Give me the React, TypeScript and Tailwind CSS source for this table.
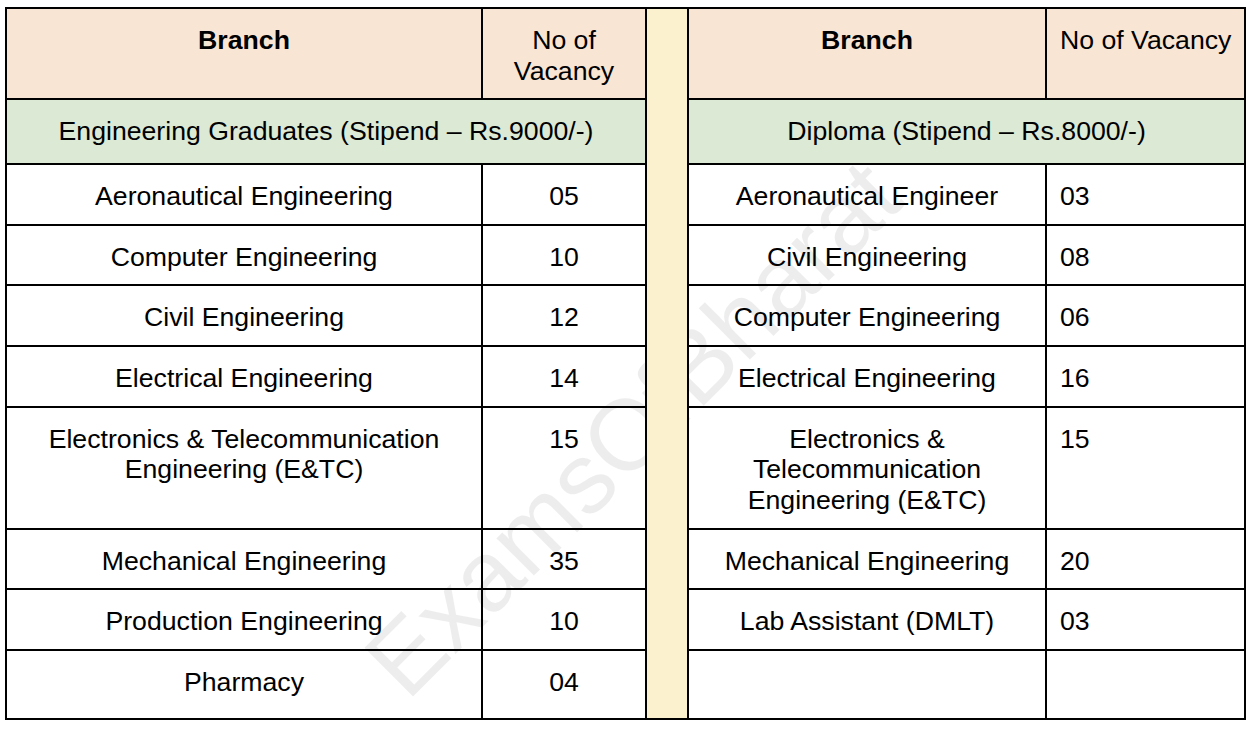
const graduates = [
  { branch: "Aeronautical Engineering", count: "05" },
  { branch: "Computer Engineering", count: "10" },
  { branch: "Civil Engineering", count: "12" },
  { branch: "Electrical Engineering", count: "14" },
  { branch: "Electronics & Telecommunication Engineering (E&TC)", count: "15" },
  { branch: "Mechanical Engineering", count: "35" },
  { branch: "Production Engineering", count: "10" },
  { branch: "Pharmacy", count: "04" },
]

const diploma = [
  { branch: "Aeronautical Engineer", count: "03" },
  { branch: "Civil Engineering", count: "08" },
  { branch: "Computer Engineering", count: "06" },
  { branch: "Electrical Engineering", count: "16" },
  { branch: "Electronics & Telecommunication Engineering (E&TC)", count: "15" },
  { branch: "Mechanical Engineering", count: "20" },
  { branch: "Lab Assistant (DMLT)", count: "03" },
  { branch: "", count: "" },
]

const cell = "border-r-2 border-b-2 border-black px-[13px] pt-[16px] align-top"

export default function App() {
  return (
    <div
      className="relative min-h-screen bg-white pl-[5px] pt-[7px] text-black"
      style={{ fontFamily: '"Liberation Sans", Arial, sans-serif' }}
    >
      <table className="w-[1241px] table-fixed border-separate border-spacing-0 border-t-2 border-l-2 border-black text-[26.67px] leading-[30.67px]">
        <colgroup>
          <col className="w-[476px]" />
          <col className="w-[164px]" />
          <col className="w-[42px]" />
          <col className="w-[358px]" />
          <col className="w-[199px]" />
        </colgroup>
        <tbody>
          <tr className="bg-[#f9e5d3]">
            <th className={`${cell} pb-[12px] text-center font-bold`}>Branch</th>
            <th className={`${cell} pb-[12px] text-center font-normal`}>
              No of
              <br />
              Vacancy
            </th>
            <td rowSpan={10} className="relative z-10 border-r-2 border-b-2 border-black bg-[#fcf1cf]" />
            <th className={`${cell} pb-[12px] text-center font-bold`}>Branch</th>
            <th className={`${cell} pb-[12px] whitespace-nowrap text-left font-normal`}>No of Vacancy</th>
          </tr>
          <tr className="bg-[#dbe9d5]">
            <td colSpan={2} className={`${cell} pb-[16px] text-center`}>
              Engineering Graduates (Stipend – Rs.9000/-)
            </td>
            <td colSpan={2} className={`${cell} pb-[16px] text-center`}>
              Diploma (Stipend – Rs.8000/-)
            </td>
          </tr>
          {graduates.map((g, i) => {
            const d = diploma[i]
            const pb = i === graduates.length - 1 ? "pb-[20px]" : "pb-[12px]"
            return (
              <tr key={i}>
                <td className={`${cell} ${pb} text-center`}>{g.branch}</td>
                <td className={`${cell} ${pb} text-center`}>{g.count}</td>
                <td className={`${cell} ${pb} text-center`}>{d.branch}</td>
                <td className={`${cell} ${pb} text-left`}>{d.count}</td>
              </tr>
            )
          })}
        </tbody>
      </table>

      {/* watermark */}
      <div className="pointer-events-none absolute left-[632px] top-[428px] -translate-x-1/2 -translate-y-1/2 -rotate-45 whitespace-nowrap text-[100px] leading-none text-black/[0.07]">
        ExamsOfBharat
      </div>
    </div>
  )
}
